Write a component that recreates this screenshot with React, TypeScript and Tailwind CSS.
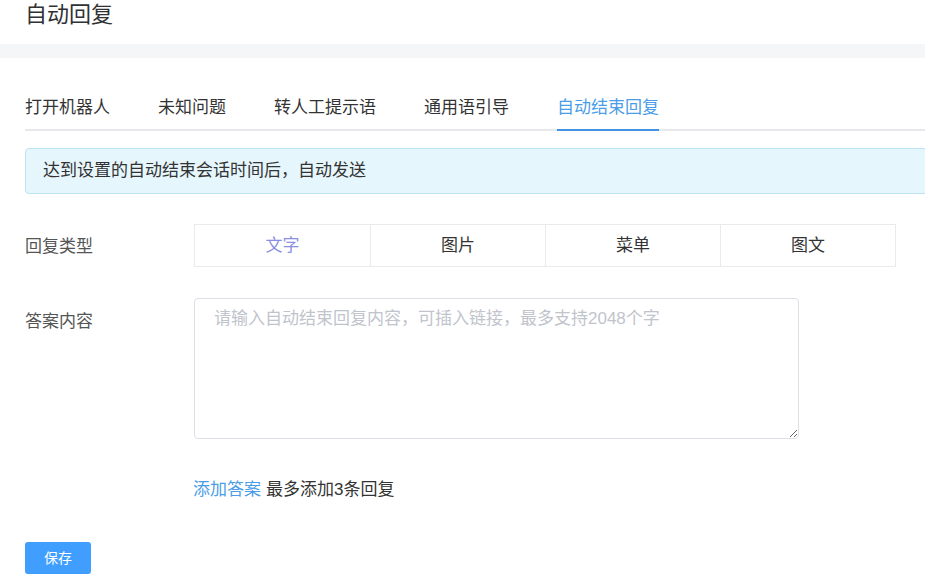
import { useState } from "react";

const tabs = ["打开机器人", "未知问题", "转人工提示语", "通用语引导", "自动结束回复"];
const replyTypes = ["文字", "图片", "菜单", "图文"];

export default function App() {
  const [activeTab, setActiveTab] = useState(4);
  const [replyType, setReplyType] = useState(0);
  const [answer, setAnswer] = useState("");

  return (
    <div
      className="w-[925px] overflow-hidden bg-white text-[#333]"
      style={{ fontFamily: '"Liberation Sans", "Noto Sans CJK SC", sans-serif' }}
    >
      <div className="h-[44px] pl-[25px] pt-[1px] text-[22px] leading-[28px] text-[#303133]">
        自动回复
      </div>
      <div className="h-[14px] bg-[#f5f6f8]" />

      <div className="pl-[25px] pt-[28px]">
        {/* tabs */}
        <div className="flex gap-[48px] border-b-2 border-[#e6e8eb]">
          {tabs.map((t, i) => (
            <button
              key={t}
              onClick={() => setActiveTab(i)}
              className={
                "relative h-[43px] text-[17px] leading-[40px] " +
                (i === activeTab ? "text-[#4a9de6]" : "text-[#333]")
              }
            >
              <span className="block">{t}</span>
              {i === activeTab && (
                <span className="absolute left-0 right-0 bottom-[-2px] h-[2px] bg-[#3f93e0]" />
              )}
            </button>
          ))}
        </div>

        {/* notice, runs past the visible edge */}
        <div className="mt-[17px] flex h-[46px] w-[920px] items-center rounded-[4px] border border-[#bce3f6] bg-[#e6f6fd] pl-[17px] text-[17px] text-[#333]">
          达到设置的自动结束会话时间后，自动发送
        </div>

        {/* reply type */}
        <div className="mt-[30px] flex items-center">
          <div className="w-[169px] pt-[3px] text-[17px] leading-[24px] text-[#555]">回复类型</div>
          <div className="grid w-[702px] grid-cols-4 border border-[#e8eaee]">
            {replyTypes.map((r, i) => (
              <button
                key={r}
                onClick={() => setReplyType(i)}
                className={
                  "h-[41px] text-[17px] leading-[41px] " +
                  (i > 0 ? "border-l border-[#e8eaee] " : "") +
                  (i === replyType ? "text-[#8a8fe2]" : "text-[#333]")
                }
              >
                {r}
              </button>
            ))}
          </div>
        </div>

        {/* answer */}
        <div className="mt-[31px] flex items-start">
          <div className="w-[169px] pt-[12px] text-[17px] leading-[24px] text-[#555]">答案内容</div>
          <textarea
            value={answer}
            onChange={(e) => setAnswer(e.target.value)}
            placeholder="请输入自动结束回复内容，可插入链接，最多支持2048个字"
            className="h-[141px] w-[605px] rounded-[4px] border border-[#dcdfe6] px-[19px] pt-[8px] text-[17px] leading-[24px] text-[#333] outline-none placeholder:text-[#c0c4cc]"
          />
        </div>

        <div className="mt-[39px] pl-[168px] text-[17px] leading-[24px]">
          <span className="cursor-pointer text-[#4a9de6]">添加答案</span>
          <span className="ml-[5px] text-[#333]">最多添加3条回复</span>
        </div>

        <button className="mt-[40px] h-[32px] w-[66px] rounded-[3px] bg-[#409eff] text-[14px] text-white">
          保存
        </button>
      </div>
    </div>
  );
}
